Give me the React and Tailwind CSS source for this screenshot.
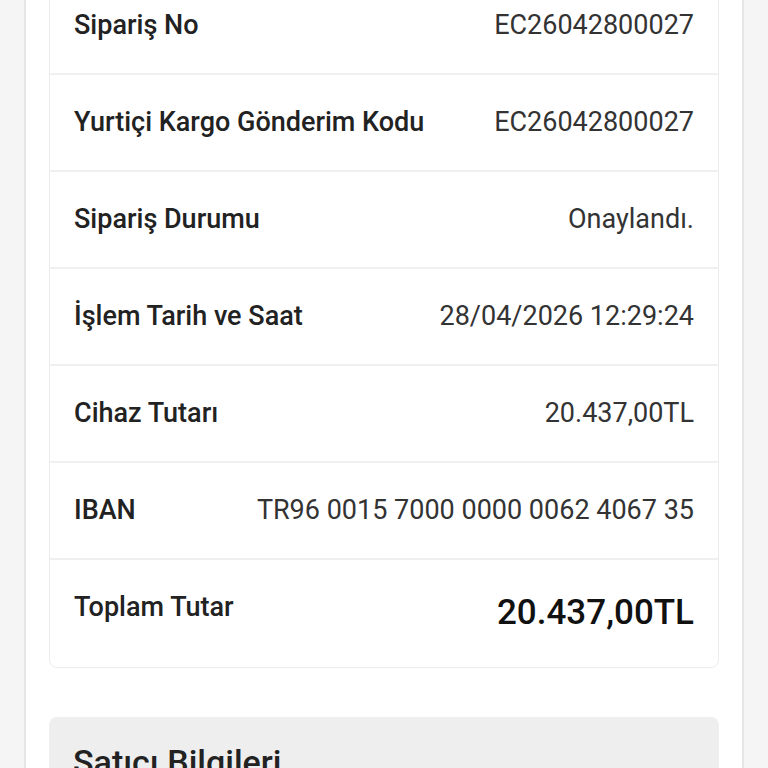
import React from "react";

const rows = [
  { label: "Sipariş No", value: "EC26042800027" },
  { label: "Yurtiçi Kargo Gönderim Kodu", value: "EC26042800027" },
  { label: "Sipariş Durumu", value: "Onaylandı." },
  { label: "İşlem Tarih ve Saat", value: "28/04/2026 12:29:24" },
  { label: "Cihaz Tutarı", value: "20.437,00TL" },
  { label: "IBAN", value: "TR96 0015 7000 0000 0062 4067 35" },
];

export default function App() {
  return (
    <div
      className="h-[768px] overflow-hidden bg-[#f5f5f5]"
      style={{ fontFamily: "Roboto, 'Noto Sans', sans-serif" }}
    >
      <div className="mx-[24px] flex h-full flex-col border-x-2 border-[#e6e6e6] bg-white px-[23px]">
        <div className="-mt-[23px] rounded-lg border border-[#ececec]">
          {rows.map((r) => (
            <div
              key={r.label}
              className="flex items-start justify-between border-b-2 border-[#f0f0f0] px-[24px] py-[30px]"
            >
              <span className="text-[27px] leading-[35px] font-medium text-[#222222]">
                {r.label}
              </span>
              <span className="text-[27px] leading-[35px] text-[#333333]">
                {r.value}
              </span>
            </div>
          ))}
          <div className="flex items-start justify-between px-[24px] pt-[30px] pb-[32px]">
            <span className="text-[27px] leading-[35px] font-medium text-[#222222]">
              Toplam Tutar
            </span>
            <span className="text-[35px] leading-[45px] font-medium text-[#111111]">
              20.437,00TL
            </span>
          </div>
        </div>
        <div className="mt-[49px] shrink-0 rounded-t-lg bg-[#eeeeee] px-[24px] pt-[25px]">
          <span className="text-[34px] leading-[41px] font-medium text-[#222222]">
            Satıcı Bilgileri
          </span>
        </div>
      </div>
    </div>
  );
}
